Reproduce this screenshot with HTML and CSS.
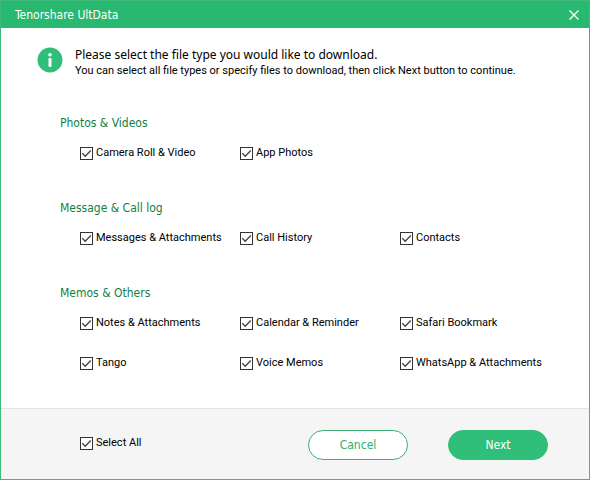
FILE: index.html
```html
<!DOCTYPE html>
<html lang="en">
<head>
    <meta charset="UTF-8">
    <meta name="viewport" content="width=device-width, initial-scale=1.0">
    <title>Tenorshare UltData</title>
    <link rel="stylesheet" href="styles.css">
</head>
<body>
    <div class="window">
        <header class="titlebar">
            <h1>Tenorshare UltData</h1>
            <button type="button" class="close" aria-label="Close">
                <svg width="10" height="10" viewBox="0 0 10 10">
                    <path d="M0.5 0.5L9.5 9.5M9.5 0.5L0.5 9.5" fill="none" stroke="#fff" stroke-width="1.3"/>
                </svg>
            </button>
        </header>

        <main class="content">
            <div class="intro">
                <svg class="info-icon" width="26" height="26" viewBox="0 0 26 26">
                    <circle cx="13" cy="13" r="12.5" fill="#2fbf78"/>
                    <circle cx="13" cy="7.7" r="1.8" fill="#fff"/>
                    <rect x="11.5" y="11" width="3" height="9" rx="1.2" fill="#fff"/>
                </svg>
                <div>
                    <p class="lead">Please select the file type you would like to download.</p>
                    <p class="hint">You can select all file types or specify files to download, then click Next button to continue.</p>
                </div>
            </div>

            <section class="group">
                <h2>Photos &amp; Videos</h2>
                <div class="options">
                    <label class="option"><input type="checkbox" checked>Camera Roll &amp; Video</label>
                    <label class="option"><input type="checkbox" checked>App Photos</label>
                </div>
            </section>

            <section class="group">
                <h2>Message &amp; Call log</h2>
                <div class="options">
                    <label class="option"><input type="checkbox" checked>Messages &amp; Attachments</label>
                    <label class="option"><input type="checkbox" checked>Call History</label>
                    <label class="option"><input type="checkbox" checked>Contacts</label>
                </div>
            </section>

            <section class="group">
                <h2>Memos &amp; Others</h2>
                <div class="options">
                    <label class="option"><input type="checkbox" checked>Notes &amp; Attachments</label>
                    <label class="option"><input type="checkbox" checked>Calendar &amp; Reminder</label>
                    <label class="option"><input type="checkbox" checked>Safari Bookmark</label>
                    <label class="option"><input type="checkbox" checked>Tango</label>
                    <label class="option"><input type="checkbox" checked>Voice Memos</label>
                    <label class="option"><input type="checkbox" checked>WhatsApp &amp; Attachments</label>
                </div>
            </section>
        </main>

        <footer class="footer">
            <label class="option"><input type="checkbox" checked>Select All</label>
            <div class="actions">
                <button type="button" class="btn">Cancel</button>
                <button type="button" class="btn btn-primary">Next</button>
            </div>
        </footer>
    </div>
</body>
</html>
```

FILE: styles.css
```css
* {
    box-sizing: border-box;
}

body {
    margin: 0;
    font-family: Tahoma, "DejaVu Sans Condensed", "Noto Sans", sans-serif;
    font-size: 12px;
    line-height: 20px;
    color: #000;
}

h1, h2, p {
    margin: 0;
    font-weight: normal;
}

.window {
    display: flex;
    flex-direction: column;
    min-height: 100vh;
    border: 1px solid #3fb97c;
    background: #fff;
}

.titlebar {
    display: flex;
    align-items: center;
    justify-content: space-between;
    height: 27px;
    padding: 0 10px 0 14px;
    background: #28b86f;
    color: #fff;
}

.titlebar h1 {
    font-size: 12px;
}

.close {
    display: flex;
    padding: 0;
    border: none;
    background: none;
    cursor: pointer;
}

.content {
    flex: 1;
    padding: 19px 29px 20px 59px;
}

.intro {
    display: flex;
    gap: 12px;
    margin-left: -23px;
    margin-bottom: 34px;
}

.lead {
    font-family: Tahoma, "Noto Sans", sans-serif;
    line-height: 16px;
}

.hint,
.option {
    font-family: Tahoma, Roboto, sans-serif;
    font-size: 11px;
}

.hint {
    line-height: 16px;
}

.group + .group {
    margin-top: 35px;
}

.group h2 {
    margin-bottom: 10px;
    font-size: 12px;
    color: #128043;
}

.options {
    display: grid;
    grid-template-columns: repeat(3, 1fr);
    row-gap: 20px;
    padding-left: 20px;
}

.option {
    display: flex;
    align-items: center;
    gap: 3px;
    white-space: nowrap;
}

.option input {
    appearance: none;
    width: 13px;
    height: 13px;
    margin: 0;
    border: 1px solid #333;
    background: #fff;
}

.option input:checked {
    background: #fff url("data:image/svg+xml,%3Csvg xmlns='http://www.w3.org/2000/svg' viewBox='0 0 11 11'%3E%3Cpath d='M1.3 5.3L4.2 8.3L9.8 2.5' fill='none' stroke='%23444' stroke-width='1.3'/%3E%3C/svg%3E") center / 11px 11px no-repeat;
}

.footer {
    display: flex;
    align-items: center;
    justify-content: space-between;
    padding: 21px 41px 19px 79px;
    border-top: 1px solid #e3e3e3;
    background: #f5f5f5;
}

.footer .option {
    padding-bottom: 4px;
}

.actions {
    display: flex;
    gap: 40px;
}

.btn {
    width: 100px;
    height: 30px;
    padding: 0;
    border: 1px solid #3fae78;
    border-radius: 15px;
    background: #fff;
    color: #28b06b;
    font-family: inherit;
    font-size: 12px;
    cursor: pointer;
}

.btn-primary {
    border-color: #2fbf78;
    background: #2fbf78;
    color: #fff;
}
```
